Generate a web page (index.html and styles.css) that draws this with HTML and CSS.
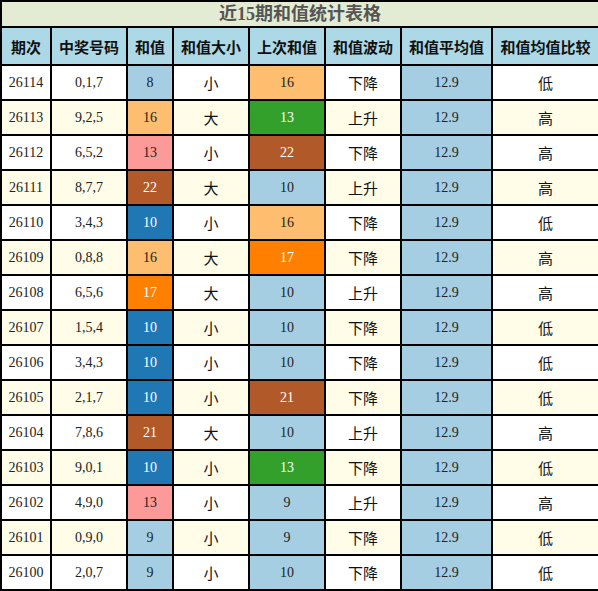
FILE: index.html
```html
<!doctype html>
<html>
	<head>
		<meta charset="utf-8">
		<link rel="stylesheet" href="styles.css">
	</head>
	<body>
		<table class="stats">
			<colgroup>
				<col class="c-issue">
				<col class="c-nums">
				<col class="c-sum">
				<col class="c-size">
				<col class="c-prev">
				<col class="c-trend">
				<col class="c-avg">
				<col class="c-cmp">
			</colgroup>
			<tr class="title-row"><td colspan="8">近15期和值统计表格</td></tr>
			<tr class="head-row">
				<th>期次</th><th>中奖号码</th><th>和值</th><th>和值大小</th>
				<th>上次和值</th><th>和值波动</th><th>和值平均值</th><th>和值均值比较</th>
			</tr>
			<tr><td>26114</td><td>0,1,7</td><td class="v-blue">8</td><td class="cn">小</td><td class="v-peach">16</td><td class="cn">下降</td><td class="avg">12.9</td><td class="cn">低</td></tr>
			<tr class="alt"><td>26113</td><td>9,2,5</td><td class="v-peach">16</td><td class="cn">大</td><td class="v-green">13</td><td class="cn">上升</td><td class="avg">12.9</td><td class="cn">高</td></tr>
			<tr><td>26112</td><td>6,5,2</td><td class="v-pink">13</td><td class="cn">小</td><td class="v-brown">22</td><td class="cn">下降</td><td class="avg">12.9</td><td class="cn">高</td></tr>
			<tr class="alt"><td>26111</td><td>8,7,7</td><td class="v-brown">22</td><td class="cn">大</td><td class="v-blue">10</td><td class="cn">上升</td><td class="avg">12.9</td><td class="cn">高</td></tr>
			<tr><td>26110</td><td>3,4,3</td><td class="v-navy">10</td><td class="cn">小</td><td class="v-peach">16</td><td class="cn">下降</td><td class="avg">12.9</td><td class="cn">低</td></tr>
			<tr class="alt"><td>26109</td><td>0,8,8</td><td class="v-peach">16</td><td class="cn">大</td><td class="v-orange">17</td><td class="cn">下降</td><td class="avg">12.9</td><td class="cn">高</td></tr>
			<tr><td>26108</td><td>6,5,6</td><td class="v-orange">17</td><td class="cn">大</td><td class="v-blue">10</td><td class="cn">上升</td><td class="avg">12.9</td><td class="cn">高</td></tr>
			<tr class="alt"><td>26107</td><td>1,5,4</td><td class="v-navy">10</td><td class="cn">小</td><td class="v-blue">10</td><td class="cn">下降</td><td class="avg">12.9</td><td class="cn">低</td></tr>
			<tr><td>26106</td><td>3,4,3</td><td class="v-navy">10</td><td class="cn">小</td><td class="v-blue">10</td><td class="cn">下降</td><td class="avg">12.9</td><td class="cn">低</td></tr>
			<tr class="alt"><td>26105</td><td>2,1,7</td><td class="v-navy">10</td><td class="cn">小</td><td class="v-brown">21</td><td class="cn">下降</td><td class="avg">12.9</td><td class="cn">低</td></tr>
			<tr><td>26104</td><td>7,8,6</td><td class="v-brown">21</td><td class="cn">大</td><td class="v-blue">10</td><td class="cn">上升</td><td class="avg">12.9</td><td class="cn">高</td></tr>
			<tr class="alt"><td>26103</td><td>9,0,1</td><td class="v-navy">10</td><td class="cn">小</td><td class="v-green">13</td><td class="cn">下降</td><td class="avg">12.9</td><td class="cn">低</td></tr>
			<tr><td>26102</td><td>4,9,0</td><td class="v-pink">13</td><td class="cn">小</td><td class="v-blue">9</td><td class="cn">上升</td><td class="avg">12.9</td><td class="cn">高</td></tr>
			<tr class="alt"><td>26101</td><td>0,9,0</td><td class="v-blue">9</td><td class="cn">小</td><td class="v-blue">9</td><td class="cn">下降</td><td class="avg">12.9</td><td class="cn">低</td></tr>
			<tr><td>26100</td><td>2,0,7</td><td class="v-blue">9</td><td class="cn">小</td><td class="v-blue">10</td><td class="cn">下降</td><td class="avg">12.9</td><td class="cn">低</td></tr>
		</table>
	</body>
</html>
```
FILE: styles.css
```css
body {
	margin: 0;
	background: #fff;
}

.stats {
	border-collapse: collapse;
	table-layout: fixed;
	width: 598px;
	font-family: "Liberation Serif", "Noto Sans CJK SC", serif;
	font-size: 14px;
	color: #222;
}

.c-issue { width: 50px; }
.c-nums { width: 76px; }
.c-sum { width: 46px; }
.c-size { width: 76px; }
.c-prev { width: 76px; }
.c-trend { width: 76px; }
.c-avg { width: 91px; }
.c-cmp { width: 107px; }

.stats td,
.stats th {
	border: 2px solid #000;
	text-align: center;
	padding: 0;
	height: 33px;
	background: #fff;
}

.stats tr.alt td {
	background: #fffce8;
}

.title-row td {
	height: 24px;
	line-height: 22px;
	background: #e3ecd2;
	color: #555;
	font-size: 18px;
	font-weight: bold;
}

.head-row th {
	height: 36px;
	background: #add8e6;
	font-family: "Noto Sans CJK SC", sans-serif;
	font-size: 15px;
	font-weight: bold;
	color: #111;
}

.stats tr td.cn {
	font-family: "Noto Sans CJK SC", sans-serif;
	font-size: 15px;
	color: #111;
}

.stats tr td.avg { background: #a6cee3; }

.stats tr td.v-blue { background: #a6cee3; }
.stats tr td.v-peach { background: #fdbf6f; }
.stats tr td.v-pink { background: #fb9a99; }
.stats tr td.v-green { background: #33a02c; color: #fff; }
.stats tr td.v-brown { background: #b15928; color: #fff; }
.stats tr td.v-navy { background: #1f78b4; color: #fff; }
.stats tr td.v-orange { background: #ff7f00; color: #fff; }
```
